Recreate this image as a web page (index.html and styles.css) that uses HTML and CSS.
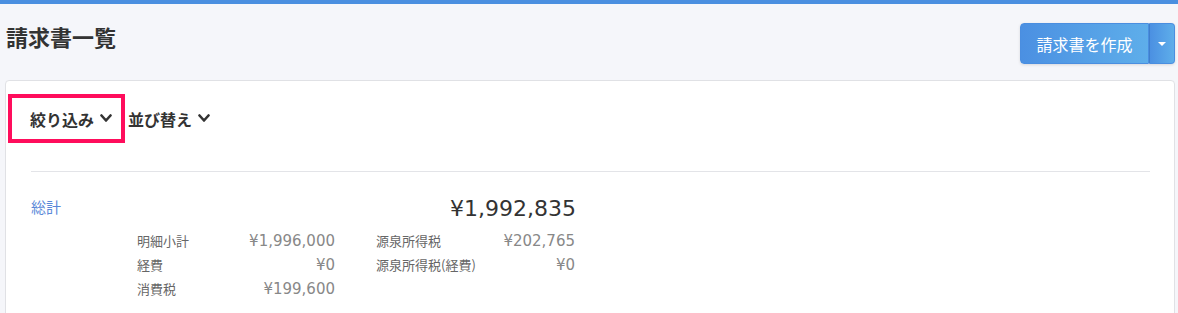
FILE: index.html
```html
<!DOCTYPE html>
<html lang="ja">
<head>
	<meta charset="UTF-8">
	<title>請求書一覧</title>
	<link rel="stylesheet" href="styles.css">
</head>
<body>
	<div class="page">
		<!-- ヘッダー -->
		<div class="header">
			<h1 class="title">請求書一覧</h1>
			<div class="btn-group">
				<button class="btn-main">請求書を作成</button>
				<button class="btn-caret"><span class="caret"></span></button>
			</div>
		</div>
		<!-- 一覧カード -->
		<div class="card">
			<div class="toolbar">
				<div class="tool tool-active">絞り込み
					<svg class="chevron" width="12" height="9" viewBox="0 0 12 9"><polyline points="1.5,1.5 6,6.5 10.5,1.5" fill="none" stroke="#333" stroke-width="2.6" stroke-linecap="round" stroke-linejoin="round"/></svg>
				</div>
				<div class="tool">並び替え
					<svg class="chevron" width="12" height="9" viewBox="0 0 12 9"><polyline points="1.5,1.5 6,6.5 10.5,1.5" fill="none" stroke="#333" stroke-width="2.6" stroke-linecap="round" stroke-linejoin="round"/></svg>
				</div>
			</div>
			<div class="divider"></div>
			<div class="summary">
				<div class="summary-title">総計</div>
				<div class="summary-body">
					<div class="total">¥1,992,835</div>
					<div class="details">
						<div class="detail-col">
							<div class="row"><span class="label">明細小計</span><span class="value">¥1,996,000</span></div>
							<div class="row"><span class="label">経費</span><span class="value">¥0</span></div>
							<div class="row"><span class="label">消費税</span><span class="value">¥199,600</span></div>
						</div>
						<div class="detail-col">
							<div class="row"><span class="label">源泉所得税</span><span class="value">¥202,765</span></div>
							<div class="row"><span class="label">源泉所得税(経費)</span><span class="value">¥0</span></div>
						</div>
					</div>
				</div>
			</div>
		</div>
	</div>
</body>
</html>
```

FILE: styles.css
```css
*{margin:0;padding:0;box-sizing:border-box;}
body {
	background: #f5f6fa;
	border-top: 4px solid #4a8fe0;
	font-family: "Noto Sans CJK JP", sans-serif;
	color: #333;
	height: 313px;
	overflow: hidden;
}
.page {
	padding: 0 3px 0 5px;
}
.header {
	display: flex;
	justify-content: space-between;
	align-items: flex-start;
	padding-top: 19px;
}
.title {
	font-size: 22px;
	font-weight: bold;
	line-height: 30px;
	padding-left: 1px;
	margin-top: -2px;
}
.btn-group {
	display: flex;
	height: 41px;
	border-radius: 4px;
	box-shadow: 0 1px 3px rgba(0,0,0,.12);
}
.btn-group button {
	border: 1px solid #4a8ee0;
	color: #fff;
	font-family: "Noto Sans CJK JP", sans-serif;
	background: linear-gradient(90deg, #4b90e2, #5eaeea);
}
.btn-main {
	width: 129px;
	font-size: 16px;
	border-radius: 4px 0 0 4px;
	border-right: none;
}
.btn-caret {
	width: 26px;
	border-radius: 0 4px 4px 0;
	border-left: 1px solid #3f7fcc !important;
	display: flex;
	align-items: center;
	justify-content: center;
}
.caret {
	width: 0;
	height: 0;
	border-left: 4px solid transparent;
	border-right: 4px solid transparent;
	border-top: 4px solid #fff;
}
.card {
	margin-top: 16px;
	background: #fff;
	border: 1px solid #e0e1e5;
	border-radius: 4px;
	padding: 13px 0 20px 2px;
}
.toolbar {
	display: flex;
	align-items: center;
	gap: 3px;
}
.tool {
	display: flex;
	align-items: center;
	font-size: 16px;
	font-weight: bold;
	color: #333;
	height: 49px;
}
.tool-active {
	border: 4px solid #ff0d5c;
	width: 117px;
	padding-left: 18px;
}
.chevron {
	margin: 0 0 0 6px;
}
.divider {
	height: 1px;
	background: #e3e4e8;
	margin: 28px 24px 0 23px;
}
.summary {
	display: flex;
	padding: 21px 0 0 23px;
}
.summary-title {
	width: 106px;
	font-size: 15px;
	color: #5a88d8;
	line-height: 28px;
}
.summary-body {
	width: 439px;
}
.total {
	text-align: right;
	font-family: "DejaVu Sans", sans-serif;
	font-size: 22px;
	line-height: 30px;
	color: #333;
	margin-top: 1px;
}
.details {
	display: grid;
	grid-template-columns: 198px 199px;
	column-gap: 41px;
	margin-top: 7px;
}
.row {
	display: flex;
	justify-content: space-between;
	align-items: baseline;
	height: 24px;
}
.label {
	font-size: 13px;
	color: #666;
}
.value {
	font-family: "DejaVu Sans", sans-serif;
	font-size: 15px;
	color: #888;
}
```
